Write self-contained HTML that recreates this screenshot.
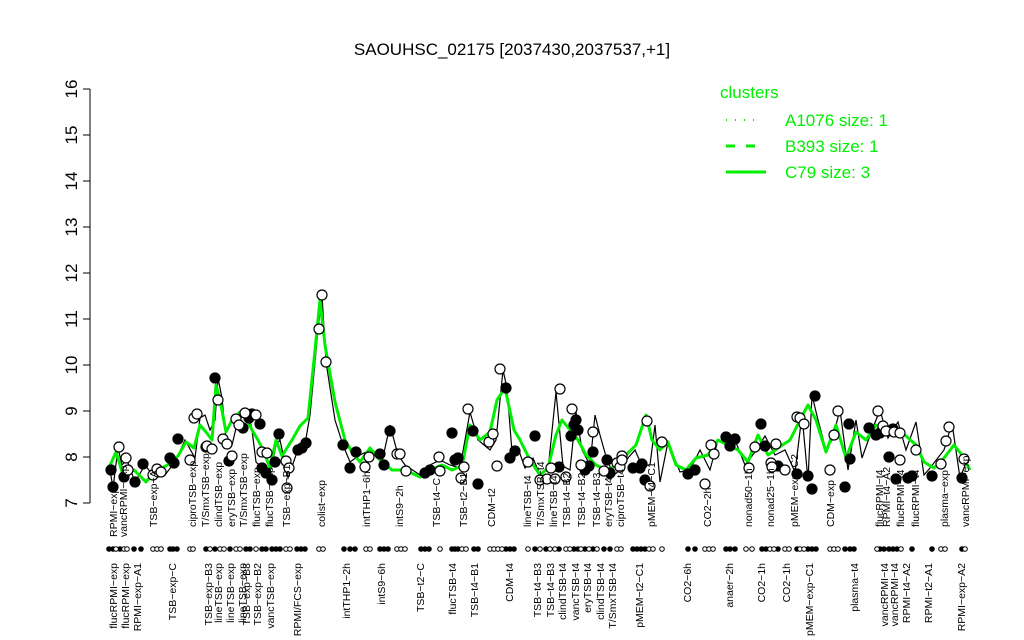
<!DOCTYPE html>
<html><head><meta charset="utf-8"><style>
html,body{margin:0;padding:0;background:#fff;}
svg{display:block;font-family:"Liberation Sans",Arial,sans-serif;}
.l text{font-size:10.5px;}
</style></head><body>
<svg width="1024" height="640" viewBox="0 0 1024 640" xmlns="http://www.w3.org/2000/svg">
<text x="512" y="55" text-anchor="middle" font-size="17">SAOUHSC_02175 [2037430,2037537,+1]</text>
<!-- y axis -->
<g stroke="#000" stroke-width="1">
<line x1="90" y1="89" x2="90" y2="503"/>
<line x1="83" y1="503" x2="90" y2="503"/><line x1="83" y1="457" x2="90" y2="457"/>
<line x1="83" y1="411" x2="90" y2="411"/><line x1="83" y1="365" x2="90" y2="365"/>
<line x1="83" y1="319" x2="90" y2="319"/><line x1="83" y1="273" x2="90" y2="273"/>
<line x1="83" y1="227" x2="90" y2="227"/><line x1="83" y1="181" x2="90" y2="181"/>
<line x1="83" y1="135" x2="90" y2="135"/><line x1="83" y1="89" x2="90" y2="89"/>
</g>
<g font-size="17" text-anchor="middle">
<text transform="translate(77,503) rotate(-90)">7</text>
<text transform="translate(77,457) rotate(-90)">8</text>
<text transform="translate(77,411) rotate(-90)">9</text>
<text transform="translate(77,365) rotate(-90)">10</text>
<text transform="translate(77,319) rotate(-90)">11</text>
<text transform="translate(77,273) rotate(-90)">12</text>
<text transform="translate(77,227) rotate(-90)">13</text>
<text transform="translate(77,181) rotate(-90)">14</text>
<text transform="translate(77,135) rotate(-90)">15</text>
<text transform="translate(77,89) rotate(-90)">16</text>
</g>
<!-- legend -->
<g fill="#00ee00" font-size="17">
<text x="720" y="98">clusters</text>
<text x="785" y="126">A1076 size: 1</text>
<text x="785" y="152">B393 size: 1</text>
<text x="785" y="178">C79 size: 3</text>
</g>
<line x1="726" y1="120" x2="762" y2="120" stroke="#00ee00" stroke-width="2" stroke-dasharray="1,8"/>
<line x1="726" y1="146" x2="762" y2="146" stroke="#00ee00" stroke-width="3" stroke-dasharray="9,11"/>
<line x1="726" y1="172" x2="766" y2="172" stroke="#00ee00" stroke-width="3"/>
<!-- black thin line -->
<polyline fill="none" stroke="#000" stroke-width="1.2" points="110,470 113,488 118,448 122,465 127,460 135,482 145,465 155,478 165,475 175,462 185,440 195,458 200,418 205,415 210,430 215,420 218,378 222,398 226,440 232,445 238,420 244,415 248,410 252,430 256,462 262,468 268,478 272,465 276,445 280,440 288,478 296,455 304,450 310,415 318,330 322,295 326,362 335,420 343,445 350,462 360,455 370,450 382,462 390,425 398,455 405,465 420,475 430,465 440,460 450,465 460,468 470,412 478,440 490,450 496,440 503,370 507,388 512,452 518,448 525,468 533,458 540,475 548,470 556,392 563,466 570,470 576,412 582,450 590,465 595,415 600,435 607,460 614,475 620,470 628,458 635,450 642,466 650,465 655,425 660,482 668,442 680,472 690,470 700,450 710,470 718,440 727,445 735,440 745,465 755,452 765,436 775,455 785,450 795,472 802,415 808,480 812,395 818,420 826,450 832,440 840,410 848,470 856,420 862,458 872,430 880,410 888,438 898,422 906,450 916,422 924,475 930,468 944,450 952,423 960,478 968,458"/>
<!-- green line -->
<polyline fill="none" stroke="#00ee00" stroke-width="3" stroke-linejoin="round" points="108,470 116,452 124,478 134,470 146,482 156,470 166,466 178,456 186,442 194,448 200,425 206,432 212,440 216,385 220,400 226,432 232,420 240,412 246,418 252,430 258,440 264,452 270,468 276,440 282,456 292,440 300,426 308,418 314,360 320,300 325,345 335,402 345,440 352,452 360,462 370,448 380,460 392,470 405,470 420,477 430,470 442,465 452,470 462,466 470,425 480,440 490,432 497,400 505,388 514,430 520,440 530,460 540,475 548,468 556,435 562,420 570,430 578,440 586,455 596,465 606,470 616,466 626,455 636,445 646,415 652,440 660,450 668,442 676,465 686,470 696,458 708,455 718,440 728,445 738,450 748,462 758,435 768,455 778,448 790,440 800,420 808,405 816,420 826,452 836,425 846,458 856,432 866,440 876,425 886,432 896,428 906,436 916,445 924,462 934,468 944,458 954,445 962,455 970,470"/>
<!-- markers -->
<g stroke="#000" stroke-width="1.2">
<g fill="#000">
<circle cx="111" cy="470" r="5"/><circle cx="113" cy="487" r="5"/><circle cx="124" cy="477" r="5"/><circle cx="135" cy="482" r="5"/><circle cx="143" cy="464" r="5"/><circle cx="170" cy="458" r="5"/><circle cx="174" cy="463" r="5"/><circle cx="178" cy="439" r="5"/><circle cx="206" cy="447" r="5"/><circle cx="215" cy="378" r="5"/><circle cx="229" cy="461" r="5"/><circle cx="243" cy="428" r="5"/><circle cx="249" cy="418" r="5"/><circle cx="252" cy="414" r="5"/><circle cx="260" cy="424" r="5"/><circle cx="262" cy="468" r="5"/><circle cx="266" cy="473" r="5"/><circle cx="272" cy="480" r="5"/><circle cx="275" cy="462" r="5"/><circle cx="279" cy="434" r="5"/><circle cx="298" cy="450" r="5"/><circle cx="302" cy="448" r="5"/><circle cx="306" cy="443" r="5"/><circle cx="343" cy="445" r="5"/><circle cx="350" cy="468" r="5"/><circle cx="356" cy="452" r="5"/><circle cx="380" cy="454" r="5"/><circle cx="384" cy="465" r="5"/><circle cx="390" cy="431" r="5"/><circle cx="425" cy="473" r="5"/><circle cx="430" cy="470" r="5"/><circle cx="452" cy="433" r="5"/><circle cx="455" cy="460" r="5"/><circle cx="458" cy="458" r="5"/><circle cx="473" cy="431" r="5"/><circle cx="478" cy="484" r="5"/><circle cx="506" cy="388" r="5"/><circle cx="510" cy="458" r="5"/><circle cx="515" cy="451" r="5"/><circle cx="535" cy="436" r="5"/><circle cx="559" cy="467" r="5"/><circle cx="571" cy="436" r="5"/><circle cx="574" cy="425" r="5"/><circle cx="576" cy="420" r="5"/><circle cx="578" cy="430" r="5"/><circle cx="585" cy="470" r="5"/><circle cx="589" cy="466" r="5"/><circle cx="593" cy="452" r="5"/><circle cx="607" cy="460" r="5"/><circle cx="610" cy="473" r="5"/><circle cx="633" cy="468" r="5"/><circle cx="640" cy="468" r="5"/><circle cx="642" cy="464" r="5"/><circle cx="645" cy="480" r="5"/><circle cx="688" cy="474" r="5"/><circle cx="695" cy="470" r="5"/><circle cx="726" cy="437" r="5"/><circle cx="730" cy="446" r="5"/><circle cx="735" cy="439" r="5"/><circle cx="761" cy="424" r="5"/><circle cx="765" cy="446" r="5"/><circle cx="778" cy="466" r="5"/><circle cx="797" cy="474" r="5"/><circle cx="808" cy="476" r="5"/><circle cx="812" cy="489" r="5"/><circle cx="815" cy="396" r="5"/><circle cx="845" cy="487" r="5"/><circle cx="849" cy="424" r="5"/><circle cx="850" cy="459" r="5"/><circle cx="869" cy="428" r="5"/><circle cx="876" cy="435" r="5"/><circle cx="880" cy="433" r="5"/><circle cx="889" cy="457" r="5"/><circle cx="893" cy="429" r="5"/><circle cx="896" cy="479" r="5"/><circle cx="908" cy="478" r="5"/><circle cx="912" cy="476" r="5"/><circle cx="932" cy="476" r="5"/><circle cx="962" cy="478" r="5"/>
</g>
<g fill="#fff">
<circle cx="119" cy="447" r="5"/><circle cx="126" cy="458" r="5"/><circle cx="128" cy="470" r="5"/><circle cx="153" cy="475" r="5"/><circle cx="157" cy="469" r="5"/><circle cx="161" cy="472" r="5"/><circle cx="190" cy="460" r="5"/><circle cx="194" cy="418" r="5"/><circle cx="197" cy="414" r="5"/><circle cx="207" cy="446" r="5"/><circle cx="212" cy="449" r="5"/><circle cx="218" cy="400" r="5"/><circle cx="223" cy="439" r="5"/><circle cx="227" cy="444" r="5"/><circle cx="232" cy="456" r="5"/><circle cx="236" cy="419" r="5"/><circle cx="239" cy="425" r="5"/><circle cx="245" cy="413" r="5"/><circle cx="256" cy="415" r="5"/><circle cx="262" cy="452" r="5"/><circle cx="267" cy="453" r="5"/><circle cx="286" cy="461" r="5"/><circle cx="289" cy="468" r="5"/><circle cx="287" cy="488" r="5"/><circle cx="319" cy="329" r="5"/><circle cx="322" cy="295" r="5"/><circle cx="326" cy="362" r="5"/><circle cx="365" cy="467" r="5"/><circle cx="369" cy="457" r="5"/><circle cx="397" cy="454" r="5"/><circle cx="400" cy="454" r="5"/><circle cx="406" cy="471" r="5"/><circle cx="439" cy="457" r="5"/><circle cx="440" cy="471" r="5"/><circle cx="461" cy="478" r="5"/><circle cx="464" cy="467" r="5"/><circle cx="468" cy="409" r="5"/><circle cx="489" cy="442" r="5"/><circle cx="493" cy="434" r="5"/><circle cx="497" cy="466" r="5"/><circle cx="500" cy="369" r="5"/><circle cx="528" cy="462" r="5"/><circle cx="540" cy="480" r="5"/><circle cx="547" cy="479" r="5"/><circle cx="551" cy="468" r="5"/><circle cx="555" cy="479" r="5"/><circle cx="560" cy="389" r="5"/><circle cx="566" cy="477" r="5"/><circle cx="572" cy="409" r="5"/><circle cx="581" cy="465" r="5"/><circle cx="593" cy="432" r="5"/><circle cx="604" cy="471" r="5"/><circle cx="617" cy="463" r="5"/><circle cx="620" cy="467" r="5"/><circle cx="622" cy="456" r="5"/><circle cx="622" cy="460" r="5"/><circle cx="647" cy="421" r="5"/><circle cx="650" cy="486" r="5"/><circle cx="662" cy="442" r="5"/><circle cx="705" cy="484" r="5"/><circle cx="711" cy="445" r="5"/><circle cx="714" cy="454" r="5"/><circle cx="749" cy="468" r="5"/><circle cx="755" cy="447" r="5"/><circle cx="771" cy="463" r="5"/><circle cx="776" cy="444" r="5"/><circle cx="772" cy="467" r="5"/><circle cx="785" cy="470" r="5"/><circle cx="797" cy="417" r="5"/><circle cx="800" cy="418" r="5"/><circle cx="804" cy="424" r="5"/><circle cx="830" cy="470" r="5"/><circle cx="834" cy="435" r="5"/><circle cx="838" cy="411" r="5"/><circle cx="878" cy="411" r="5"/><circle cx="883" cy="426" r="5"/><circle cx="886" cy="431" r="5"/><circle cx="894" cy="432" r="5"/><circle cx="900" cy="433" r="5"/><circle cx="900" cy="460" r="5"/><circle cx="916" cy="450" r="5"/><circle cx="941" cy="464" r="5"/><circle cx="946" cy="441" r="5"/><circle cx="949" cy="427" r="5"/><circle cx="964" cy="459" r="5"/>
</g>
</g>
<!-- dot row -->
<g stroke="#000" stroke-width="1" >
<g fill="#000">
<circle cx="109" cy="549" r="2.3"/><circle cx="113" cy="549" r="2.3"/><circle cx="120" cy="549" r="2.3"/><circle cx="134" cy="549" r="2.3"/><circle cx="141" cy="549" r="2.3"/><circle cx="170" cy="549" r="2.3"/><circle cx="173" cy="549" r="2.3"/><circle cx="177" cy="549" r="2.3"/><circle cx="206" cy="549" r="2.3"/><circle cx="215" cy="549" r="2.3"/><circle cx="230" cy="549" r="2.3"/><circle cx="246" cy="549" r="2.3"/><circle cx="250" cy="549" r="2.3"/><circle cx="262" cy="549" r="2.3"/><circle cx="266" cy="549" r="2.3"/><circle cx="272" cy="549" r="2.3"/><circle cx="276" cy="549" r="2.3"/><circle cx="280" cy="549" r="2.3"/><circle cx="297" cy="549" r="2.3"/><circle cx="301" cy="549" r="2.3"/><circle cx="305" cy="549" r="2.3"/><circle cx="344" cy="549" r="2.3"/><circle cx="350" cy="549" r="2.3"/><circle cx="355" cy="549" r="2.3"/><circle cx="380" cy="549" r="2.3"/><circle cx="384" cy="549" r="2.3"/><circle cx="388" cy="549" r="2.3"/><circle cx="421" cy="549" r="2.3"/><circle cx="425" cy="549" r="2.3"/><circle cx="429" cy="549" r="2.3"/><circle cx="452" cy="549" r="2.3"/><circle cx="455" cy="549" r="2.3"/><circle cx="458" cy="549" r="2.3"/><circle cx="474" cy="549" r="2.3"/><circle cx="478" cy="549" r="2.3"/><circle cx="506" cy="549" r="2.3"/><circle cx="510" cy="549" r="2.3"/><circle cx="514" cy="549" r="2.3"/><circle cx="535" cy="549" r="2.3"/><circle cx="546" cy="549" r="2.3"/><circle cx="559" cy="549" r="2.3"/><circle cx="574" cy="549" r="2.3"/><circle cx="578" cy="549" r="2.3"/><circle cx="585" cy="549" r="2.3"/><circle cx="593" cy="549" r="2.3"/><circle cx="604" cy="549" r="2.3"/><circle cx="610" cy="549" r="2.3"/><circle cx="633" cy="549" r="2.3"/><circle cx="637" cy="549" r="2.3"/><circle cx="641" cy="549" r="2.3"/><circle cx="645" cy="549" r="2.3"/><circle cx="688" cy="549" r="2.3"/><circle cx="695" cy="549" r="2.3"/><circle cx="726" cy="549" r="2.3"/><circle cx="730" cy="549" r="2.3"/><circle cx="735" cy="549" r="2.3"/><circle cx="762" cy="549" r="2.3"/><circle cx="766" cy="549" r="2.3"/><circle cx="778" cy="549" r="2.3"/><circle cx="797" cy="549" r="2.3"/><circle cx="808" cy="549" r="2.3"/><circle cx="812" cy="549" r="2.3"/><circle cx="816" cy="549" r="2.3"/><circle cx="845" cy="549" r="2.3"/><circle cx="850" cy="549" r="2.3"/><circle cx="854" cy="549" r="2.3"/><circle cx="880" cy="549" r="2.3"/><circle cx="884" cy="549" r="2.3"/><circle cx="889" cy="549" r="2.3"/><circle cx="893" cy="549" r="2.3"/><circle cx="897" cy="549" r="2.3"/><circle cx="912" cy="549" r="2.3"/><circle cx="932" cy="549" r="2.3"/><circle cx="962" cy="549" r="2.3"/>
</g>
<g fill="#fff">
<circle cx="116" cy="549" r="2.3"/><circle cx="124" cy="549" r="2.3"/><circle cx="127" cy="549" r="2.3"/><circle cx="153" cy="549" r="2.3"/><circle cx="157" cy="549" r="2.3"/><circle cx="161" cy="549" r="2.3"/><circle cx="190" cy="549" r="2.3"/><circle cx="193" cy="549" r="2.3"/><circle cx="210" cy="549" r="2.3"/><circle cx="220" cy="549" r="2.3"/><circle cx="224" cy="549" r="2.3"/><circle cx="236" cy="549" r="2.3"/><circle cx="240" cy="549" r="2.3"/><circle cx="256" cy="549" r="2.3"/><circle cx="286" cy="549" r="2.3"/><circle cx="290" cy="549" r="2.3"/><circle cx="319" cy="549" r="2.3"/><circle cx="323" cy="549" r="2.3"/><circle cx="366" cy="549" r="2.3"/><circle cx="370" cy="549" r="2.3"/><circle cx="397" cy="549" r="2.3"/><circle cx="401" cy="549" r="2.3"/><circle cx="405" cy="549" r="2.3"/><circle cx="440" cy="549" r="2.3"/><circle cx="462" cy="549" r="2.3"/><circle cx="466" cy="549" r="2.3"/><circle cx="490" cy="549" r="2.3"/><circle cx="494" cy="549" r="2.3"/><circle cx="498" cy="549" r="2.3"/><circle cx="502" cy="549" r="2.3"/><circle cx="528" cy="549" r="2.3"/><circle cx="540" cy="549" r="2.3"/><circle cx="550" cy="549" r="2.3"/><circle cx="555" cy="549" r="2.3"/><circle cx="566" cy="549" r="2.3"/><circle cx="570" cy="549" r="2.3"/><circle cx="581" cy="549" r="2.3"/><circle cx="589" cy="549" r="2.3"/><circle cx="597" cy="549" r="2.3"/><circle cx="617" cy="549" r="2.3"/><circle cx="621" cy="549" r="2.3"/><circle cx="649" cy="549" r="2.3"/><circle cx="653" cy="549" r="2.3"/><circle cx="662" cy="549" r="2.3"/><circle cx="705" cy="549" r="2.3"/><circle cx="709" cy="549" r="2.3"/><circle cx="713" cy="549" r="2.3"/><circle cx="746" cy="549" r="2.3"/><circle cx="752" cy="549" r="2.3"/><circle cx="770" cy="549" r="2.3"/><circle cx="774" cy="549" r="2.3"/><circle cx="785" cy="549" r="2.3"/><circle cx="789" cy="549" r="2.3"/><circle cx="800" cy="549" r="2.3"/><circle cx="804" cy="549" r="2.3"/><circle cx="830" cy="549" r="2.3"/><circle cx="834" cy="549" r="2.3"/><circle cx="838" cy="549" r="2.3"/><circle cx="877" cy="549" r="2.3"/><circle cx="901" cy="549" r="2.3"/><circle cx="941" cy="549" r="2.3"/><circle cx="945" cy="549" r="2.3"/><circle cx="965" cy="549" r="2.3"/>
</g>
</g>
<!-- top labels -->
<g class="l" font-size="10.5">
<text transform="translate(117,537) rotate(-90)">RPMI−exp</text>
<text transform="translate(127,537) rotate(-90)">vancRPMI−exp</text>
<text transform="translate(157,527) rotate(-90)">TSB−exp−A</text>
<text transform="translate(196,527) rotate(-90)">ciproTSB−exp</text>
<text transform="translate(209,527) rotate(-90)">T/SmxTSB−exp</text>
<text transform="translate(222,527) rotate(-90)">clindTSB−exp</text>
<text transform="translate(235,527) rotate(-90)">eryTSB−exp</text>
<text transform="translate(247,527) rotate(-90)">T/SmxTSB−exp</text>
<text transform="translate(260,527) rotate(-90)">flucTSB−exp</text>
<text transform="translate(273,527) rotate(-90)">flucTSB−exp</text>
<text transform="translate(290,527) rotate(-90)">TSB−exp−B1</text>
<text transform="translate(325,527) rotate(-90)">colist−exp</text>
<text transform="translate(370,527) rotate(-90)">intTHP1−6h</text>
<text transform="translate(403,527) rotate(-90)">intS9−2h</text>
<text transform="translate(440,527) rotate(-90)">TSB−t4−C</text>
<text transform="translate(467,527) rotate(-90)">TSB−t2−B1</text>
<text transform="translate(495,527) rotate(-90)">CDM−t2</text>
<text transform="translate(531,527) rotate(-90)">lineTSB−t4</text>
<text transform="translate(544,527) rotate(-90)">T/SmxTSB−t4</text>
<text transform="translate(557,527) rotate(-90)">lineTSB−t4</text>
<text transform="translate(570,527) rotate(-90)">TSB−t4−B2</text>
<text transform="translate(585,527) rotate(-90)">TSB−t4−B2</text>
<text transform="translate(600,527) rotate(-90)">TSB−t4−B3</text>
<text transform="translate(612,527) rotate(-90)">eryTSB−t4</text>
<text transform="translate(624,527) rotate(-90)">ciproTSB−t4</text>
<text transform="translate(655,527) rotate(-90)">pMEM−t4−C1</text>
<text transform="translate(711,527) rotate(-90)">CO2−2h</text>
<text transform="translate(752,527) rotate(-90)">nonad50−1h</text>
<text transform="translate(774,527) rotate(-90)">nonad25−1h</text>
<text transform="translate(798,527) rotate(-90)">pMEM−exp−C2</text>
<text transform="translate(834,527) rotate(-90)">CDM−exp</text>
<text transform="translate(883,527) rotate(-90)">flucRPMI−t4</text>
<text transform="translate(890,527) rotate(-90)">RPMI−t4−A2</text>
<text transform="translate(904,527) rotate(-90)">flucRPMI−t4</text>
<text transform="translate(919,527) rotate(-90)">flucRPMI−t4</text>
<text transform="translate(948,527) rotate(-90)">plasma−exp</text>
<text transform="translate(969,527) rotate(-90)">vancRPMI−exp</text>
</g>
<!-- bottom labels -->
<g class="l" font-size="10.5" text-anchor="end">
<text transform="translate(117,563) rotate(-90)">flucRPMI−exp</text>
<text transform="translate(129,563) rotate(-90)">flucRPMI−exp</text>
<text transform="translate(141,563) rotate(-90)">RPMI−exp−A1</text>
<text transform="translate(176,563) rotate(-90)">TSB−exp−C</text>
<text transform="translate(212,563) rotate(-90)">TSB−exp−B3</text>
<text transform="translate(222,563) rotate(-90)">lineTSB−exp</text>
<text transform="translate(234,563) rotate(-90)">lineTSB−exp</text>
<text transform="translate(246,563) rotate(-90)">lineTSB−exp</text>
<text transform="translate(250,563) rotate(-90)">TSB−exp−B3</text>
<text transform="translate(261,563) rotate(-90)">TSB−exp−B2</text>
<text transform="translate(274,563) rotate(-90)">vancTSB−exp</text>
<text transform="translate(301,563) rotate(-90)">RPMI/FCS−exp</text>
<text transform="translate(350,563) rotate(-90)">intTHP1−2h</text>
<text transform="translate(385,563) rotate(-90)">intS9−6h</text>
<text transform="translate(424,563) rotate(-90)">TSB−t2−C</text>
<text transform="translate(456,563) rotate(-90)">flucTSB−t4</text>
<text transform="translate(478,563) rotate(-90)">TSB−t4−B1</text>
<text transform="translate(513,563) rotate(-90)">CDM−t4</text>
<text transform="translate(541,563) rotate(-90)">TSB−t4−B3</text>
<text transform="translate(554,563) rotate(-90)">TSB−t4−B3</text>
<text transform="translate(566,563) rotate(-90)">clindTSB−t4</text>
<text transform="translate(579,563) rotate(-90)">vancTSB−t4</text>
<text transform="translate(591,563) rotate(-90)">eryTSB−t4</text>
<text transform="translate(604,563) rotate(-90)">clindTSB−t4</text>
<text transform="translate(616,563) rotate(-90)">T/SmxTSB−t4</text>
<text transform="translate(643,563) rotate(-90)">pMEM−t2−C1</text>
<text transform="translate(691,563) rotate(-90)">CO2−6h</text>
<text transform="translate(733,563) rotate(-90)">anaer−2h</text>
<text transform="translate(765,563) rotate(-90)">CO2−1h</text>
<text transform="translate(790,563) rotate(-90)">CO2−1h</text>
<text transform="translate(813,563) rotate(-90)">pMEM−exp−C1</text>
<text transform="translate(858,563) rotate(-90)">plasma−t4</text>
<text transform="translate(888,563) rotate(-90)">vancRPMI−t4</text>
<text transform="translate(898,563) rotate(-90)">vancRPMI−t4</text>
<text transform="translate(910,563) rotate(-90)">RPMI−t4−A2</text>
<text transform="translate(932,563) rotate(-90)">RPMI−t2−A1</text>
<text transform="translate(965,563) rotate(-90)">RPMI−exp−A2</text>
</g>
</svg>
</body></html>
